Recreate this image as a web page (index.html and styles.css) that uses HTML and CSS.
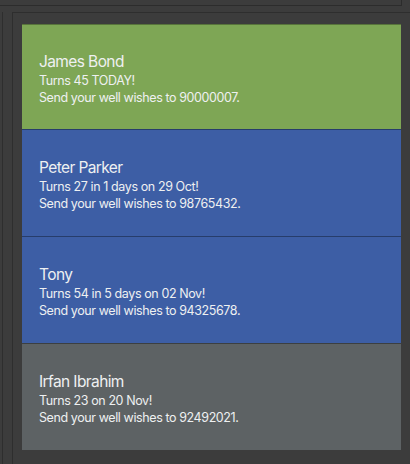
FILE: index.html
```html
<!DOCTYPE html>
<html>
<head>
<meta charset="utf-8">
<link rel="stylesheet" href="styles.css">
</head>
<body>
<div class="app">
  <div class="topbar"></div>
  <div class="main">
    <div class="rail"></div>
    <div class="panel">
      <div class="list">
        <div class="card green">
          <div class="name">James Bond</div>
          <div class="line">Turns 45 TODAY!</div>
          <div class="line">Send your well wishes to 90000007.</div>
        </div>
        <div class="card blue">
          <div class="name">Peter Parker</div>
          <div class="line">Turns 27 in 1 days on 29 Oct!</div>
          <div class="line">Send your well wishes to 98765432.</div>
        </div>
        <div class="card blue">
          <div class="name">Tony</div>
          <div class="line">Turns 54 in 5 days on 02 Nov!</div>
          <div class="line">Send your well wishes to 94325678.</div>
        </div>
        <div class="card gray">
          <div class="name">Irfan Ibrahim</div>
          <div class="line">Turns 23 on 20 Nov!</div>
          <div class="line">Send your well wishes to 92492021.</div>
        </div>
      </div>
      <div class="scroll"></div>
    </div>
  </div>
</div>
</body>
</html>
```
FILE: styles.css
```css
html, body {
  margin: 0;
  padding: 0;
  background: #3c3c3c;
  font-family: Inter, "Noto Sans", sans-serif;
  height: 100%;
  overflow: hidden;
}
.app {
  display: flex;
  flex-direction: column;
  height: 464px;
}
.topbar {
  height: 5px;
  width: 401px;
  border-bottom: 1px solid #2c2c2c;
  border-right: 1px solid #2c2c2c;
}
.main {
  flex: 1;
  display: flex;
  margin-top: 6px;
}
.rail {
  width: 9px;
  margin-left: 2px;
  border-left: 1px solid #2e2e2e;
}
.panel {
  flex: 1;
  display: flex;
  border-left: 1px solid #2e2e2e;
  border-top: 1px solid #2e2e2e;
  padding: 11px 0 0 9px;
}
.list {
  width: 379px;
  display: flex;
  flex-direction: column;
}
.scroll {
  flex: 1;
}
.card {
  height: 105px;
  box-sizing: border-box;
  border-top: 1px solid rgba(0, 0, 0, 0.3);
  display: flex;
  flex-direction: column;
  justify-content: center;
  padding: 3px 17px 0;
  color: #eef0f1;
}
.card + .card {
  height: 107px;
  border-top: 1px solid rgba(0, 0, 0, 0.35);
}
.green { background: #7ea655; }
.blue { background: #3d5ea5; }
.gray { background: #5d6264; }
.name {
  font-size: 15.5px;
  line-height: 20px;
  letter-spacing: -0.6px;
}
.line {
  font-size: 12.5px;
  line-height: 17px;
  letter-spacing: -0.4px;
}
```
